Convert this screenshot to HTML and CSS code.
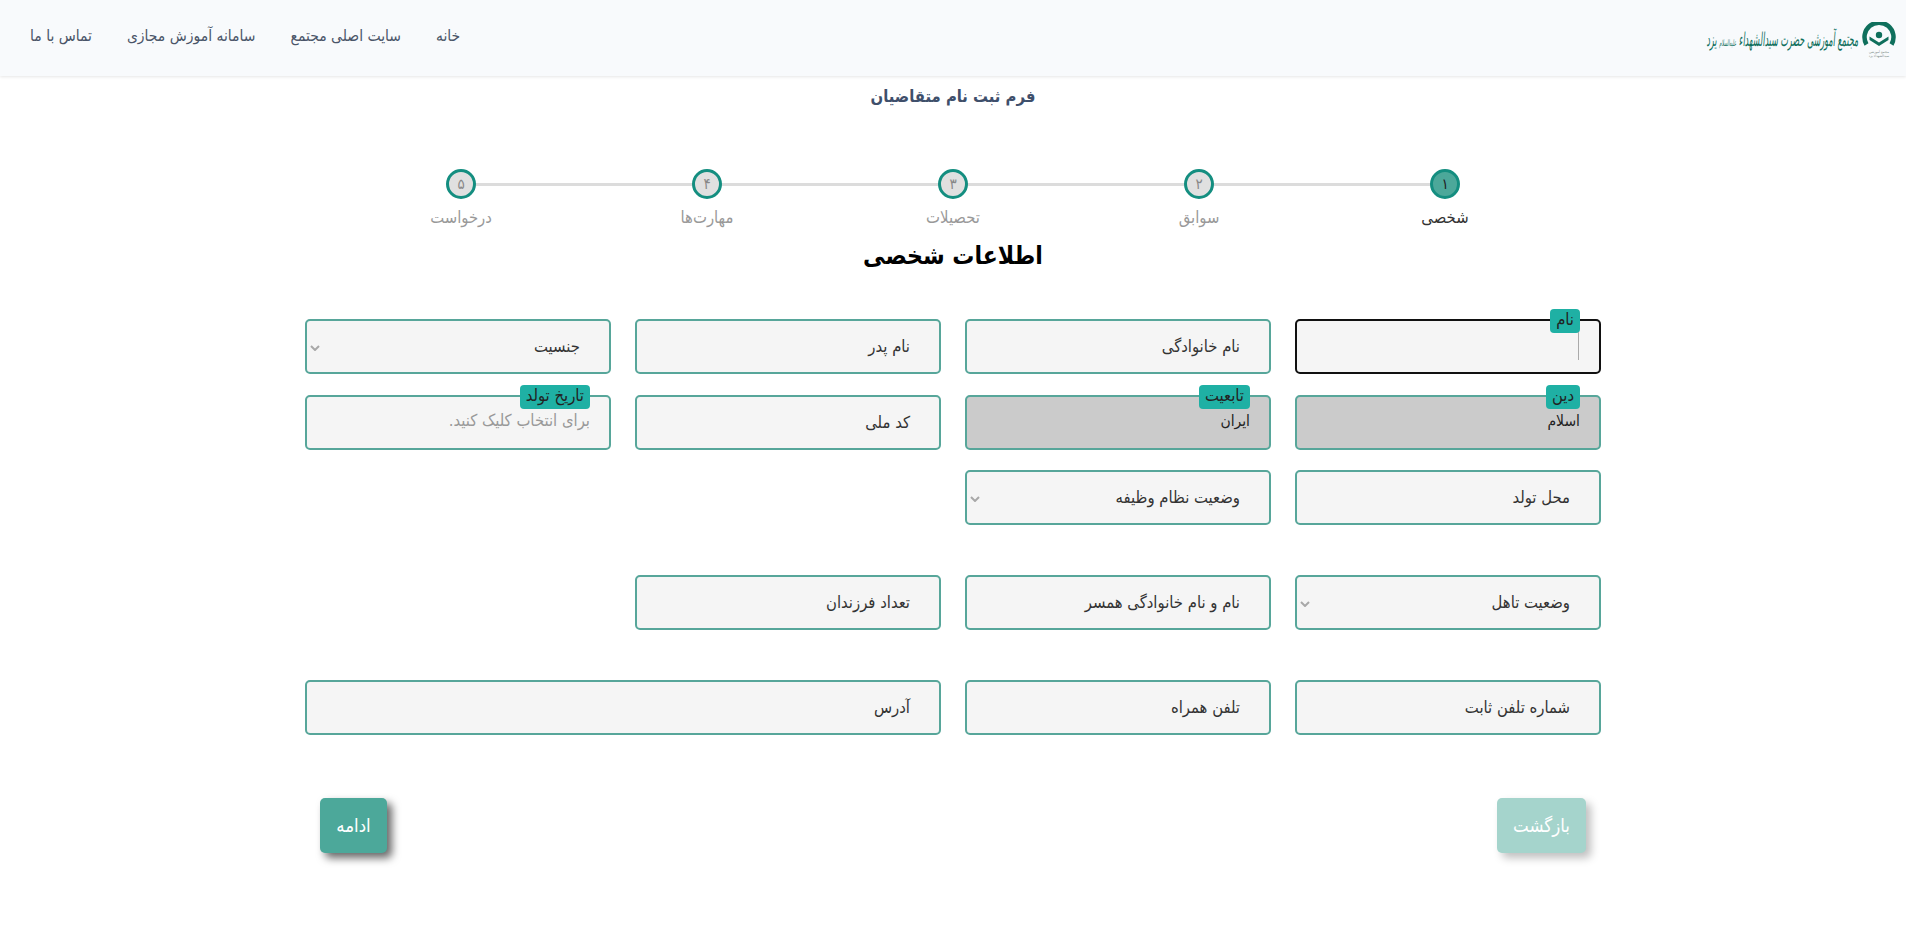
FILE: index.html
```html
<!DOCTYPE html>
<html lang="fa" dir="rtl">
<head>
<meta charset="utf-8">
<title>فرم ثبت نام متقاضیان</title>
<link rel="stylesheet" href="styles.css">
</head>
<body>
<header class="topbar">
  <a class="brand" href="#">
    <svg class="brand-mark" viewBox="0 0 34 36" aria-hidden="true">
      <path d="M4.500 22.500A14.500 14.500 0 1 1 29.500 22.500" fill="none" stroke="#0f6f5c" stroke-width="4.500"/>
      <path d="M7.500 14.500l9.500 6 9.500-6v3.500l-9.500 6-9.500-6z" fill="#0f6f5c"/>
      <circle cx="17" cy="13" r="3.200" fill="#0f6f5c"/>
      <text class="brand-caption" x="17" y="31" text-anchor="middle">مجتمع آموزشی</text>
      <text class="brand-caption" x="17" y="35" text-anchor="middle">سیدالشهداء یزد</text>
    </svg>
    <span class="brand-name">مجتمع آموزشی حضرت سیدالشهداء <small>علیه‌السلام</small> یزد</span>
  </a>
  <nav class="menu">
    <a href="#">خانه</a>
    <a href="#">سایت اصلی مجتمع</a>
    <a href="#">سامانه آموزش مجازی</a>
    <a href="#">تماس با ما</a>
  </nav>
</header>

<main class="page">
  <h1 class="page-title">فرم ثبت نام متقاضیان</h1>

  <ol class="stepper">
    <li class="step is-active"><span class="dot">۱</span><span class="step-name">شخصی</span></li>
    <li class="step"><span class="dot">۲</span><span class="step-name">سوابق</span></li>
    <li class="step"><span class="dot">۳</span><span class="step-name">تحصیلات</span></li>
    <li class="step"><span class="dot">۴</span><span class="step-name">مهارت‌ها</span></li>
    <li class="step"><span class="dot">۵</span><span class="step-name">درخواست</span></li>
  </ol>

  <h2 class="section-title">اطلاعات شخصی</h2>

  <form class="form">
    <div class="grid">
      <div class="field is-focus"><span class="tag">نام</span><span class="caret"></span></div>
      <div class="field"><span class="hint">نام خانوادگی</span></div>
      <div class="field"><span class="hint">نام پدر</span></div>
      <div class="field is-select"><span class="hint">جنسیت</span><svg class="chev" viewBox="0 0 10 6"><path d="M1 1l4 4 4-4" fill="none" stroke="#a8a8a8" stroke-width="2"/></svg></div>

      <div class="field is-locked"><span class="tag">دین</span><span class="value">اسلام</span></div>
      <div class="field is-locked"><span class="tag">تابعیت</span><span class="value">ایران</span></div>
      <div class="field"><span class="hint">کد ملی</span></div>
      <div class="field"><span class="tag">تاریخ تولد</span><span class="placeholder">برای انتخاب کلیک کنید.</span></div>

      <div class="field"><span class="hint">محل تولد</span></div>
      <div class="field is-select"><span class="hint">وضعیت نظام وظیفه</span><svg class="chev" viewBox="0 0 10 6"><path d="M1 1l4 4 4-4" fill="none" stroke="#a8a8a8" stroke-width="2"/></svg></div>
    </div>

    <div class="grid grid-spaced">
      <div class="field is-select"><span class="hint">وضعیت تاهل</span><svg class="chev" viewBox="0 0 10 6"><path d="M1 1l4 4 4-4" fill="none" stroke="#a8a8a8" stroke-width="2"/></svg></div>
      <div class="field"><span class="hint">نام و نام خانوادگی همسر</span></div>
      <div class="field"><span class="hint">تعداد فرزندان</span></div>
    </div>

    <div class="grid grid-spaced">
      <div class="field"><span class="hint">شماره تلفن ثابت</span></div>
      <div class="field"><span class="hint">تلفن همراه</span></div>
      <div class="field span-2"><span class="hint">آدرس</span></div>
    </div>

    <div class="actions">
      <button type="button" class="btn btn-back">بازگشت</button>
      <button type="button" class="btn btn-next">ادامه</button>
    </div>
  </form>
</main>
</body>
</html>
```
FILE: styles.css
```css
* { box-sizing: border-box; }
html, body { margin: 0; height: 100%; }
body {
  background: #fff;
  color: #222;
  font-family: "DejaVu Sans Condensed", "DejaVu Sans", "Noto Sans", sans-serif;
  font-stretch: condensed;
  font-size: 16.500px;
  overflow: hidden;
}
.topbar {
  height: 76px;
  background: #f8fafc;
  box-shadow: 0 1px 3px rgba(0,0,0,.10);
  display: flex;
  align-items: center;
  justify-content: space-between;
  padding: 0 10px 5px 30px;
}
.brand { display: flex; align-items: center; gap: 3px; text-decoration: none; }
.brand-mark { width: 34px; height: 36px; margin-top: 8px; }
.brand-caption { font-size: 3.500px; fill: #7a8a85; }
.brand-name {
  display: block;
  width: 160px;
  transform: scaleX(.47) skewX(-10deg);
  transform-origin: right center;
  margin-top: 6px;
  font-family: "DejaVu Serif Condensed", "DejaVu Sans", serif;
  font-size: 19px;
  color: #0f6f5c;
  white-space: nowrap;
}
.brand-name small { font-size: 9px; }
.menu { display: flex; gap: 35px; }
.menu a {
  color: #4a5568;
  font-size: 15.500px;
  text-decoration: none;
  white-space: nowrap;
}
.page { padding: 0 305px; }
.page-title {
  margin: 9px 0 0;
  height: 24px;
  line-height: 24px;
  text-align: center;
  font-size: 16.500px;
  font-weight: 700;
  color: #3f4f6b;
}
.stepper {
  list-style: none;
  margin: 60px auto 0;
  padding: 0;
  width: 1230px;
  display: grid;
  grid-template-columns: repeat(5, 246px);
}
.step {
  display: flex;
  flex-direction: column;
  align-items: center;
  position: relative;
}
.step:not(:last-child)::after {
  content: "";
  position: absolute;
  top: 14px;
  right: 50%;
  width: 246px;
  height: 3px;
  background: #dcdcdc;
}
.dot {
  position: relative;
  z-index: 1;
  width: 30px;
  height: 30px;
  border-radius: 50%;
  border: 3px solid #148e80;
  background: #e0e0e0;
  color: #888;
  font-size: 15px;
  display: flex;
  align-items: center;
  justify-content: center;
}
.step-name {
  margin-top: 9px;
  line-height: 20px;
  color: #999;
  white-space: nowrap;
}
.is-active .dot { background: #4ca89a; color: #222; }
.is-active .step-name { color: #333; }
.section-title {
  margin: 8px 0 0;
  height: 40px;
  line-height: 40px;
  text-align: center;
  font-size: 24.500px;
  font-weight: 700;
  color: #000;
}
.form { margin-top: 43px; }
.grid {
  display: grid;
  grid-template-columns: repeat(4, 306px);
  gap: 20.500px 24px;
}
.grid-spaced { margin-top: 50px; }
.field {
  position: relative;
  height: 55px;
  background: #f5f5f5;
  border: 2px solid #57a69a;
  border-radius: 5px;
  display: flex;
  align-items: center;
  padding: 0 29px;
}
.span-2 { grid-column: span 2; }
.hint { color: #333; }
.value { font-size: 15.500px; color: #222; margin-top: -3px; margin-right: -10px; }
.placeholder { color: #999; margin-top: -3px; margin-right: -10px; }
.is-locked { background: #cbcbcb; }
.is-focus { border-color: #111; }
.caret {
  position: absolute;
  top: 11px;
  right: 20px;
  width: 1px;
  height: 28px;
  background: #aaa;
}
.tag {
  position: absolute;
  top: -12px;
  right: 19px;
  height: 24px;
  line-height: 22px;
  padding: 0 6px;
  background: #1fb0a4;
  border-radius: 4px;
  color: #222;
  white-space: nowrap;
}
.chev {
  position: absolute;
  left: 3px;
  top: 50%;
  width: 10px;
  height: 6px;
  margin-top: -2px;
}
.actions {
  display: flex;
  justify-content: space-between;
  margin-top: 63px;
  padding: 0 15px;
}
.btn {
  height: 55px;
  border: 0;
  border-radius: 5px;
  color: #fff;
  font-family: inherit;
  font-stretch: inherit;
  font-size: 18.500px;
}
.btn-next {
  width: 67px;
  background: #4ca89a;
  box-shadow: 5px 5px 8px rgba(0,0,0,.6);
}
.btn-back {
  width: 89px;
  background: #a5d4cc;
  box-shadow: 5px 5px 8px rgba(0,0,0,.25);
}
```
